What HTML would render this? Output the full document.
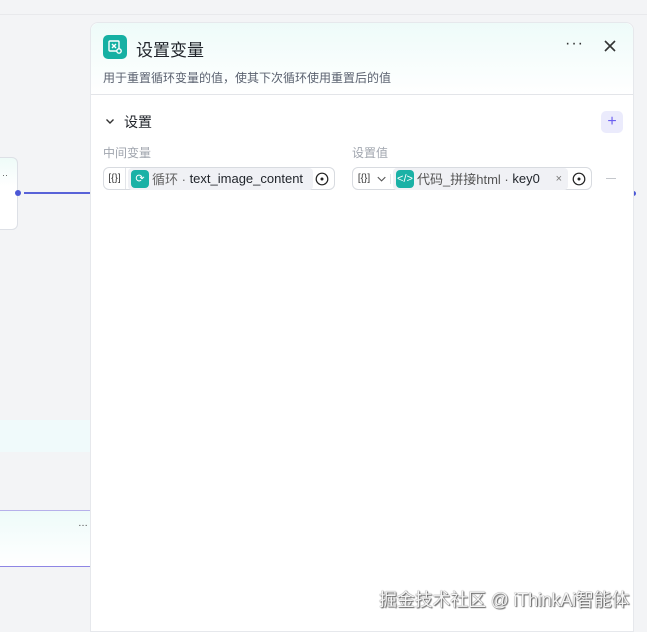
<!DOCTYPE html>
<html><head><meta charset="utf-8"><style>
*{box-sizing:border-box;margin:0;padding:0}
body{width:647px;height:623px;overflow:hidden;background:#f3f4f6;position:relative;font-family:"Liberation Sans","Noto Sans CJK SC",sans-serif;color:#1f2329}
.abs{position:absolute}
.panel{left:90px;top:22px;width:544px;height:610px;background:#fff;border:1px solid #e6e8ec;border-radius:8px 8px 0 0}
.hdr{position:absolute;left:0;top:0;width:100%;height:72px;background:linear-gradient(180deg,#eefbf9,#fff);border-bottom:1px solid #e3e5e9;border-radius:8px 8px 0 0}
.chip{display:inline-flex;align-items:center;height:22px;border-radius:4px;font-size:13px}
.field{position:absolute;top:144px;height:23px;border:1px solid #d8dbe0;border-radius:6px;background:#fff;display:flex;align-items:center}
.icon{width:18px;height:18px;background:#1ab1a6;border-radius:4px;display:inline-flex;align-items:center;justify-content:center;color:#fff;font-size:11px;margin-right:3px}
</style></head><body>
<div class="abs" style="left:-10px;top:157px;width:28px;height:73px;background:linear-gradient(180deg,#eefbf8,#fff 40%);border:1px solid #dde0e6;border-radius:6px"></div>
<div class="abs" style="left:2px;top:170px;font-size:9px;color:#555">··</div>
<div class="abs" style="left:15px;top:190px;width:6px;height:6px;border-radius:50%;background:#4b57d6"></div>
<div class="abs" style="left:24px;top:192px;width:66px;height:1.5px;background:#5862d8"></div>
<div class="abs" style="left:631px;top:191px;width:5px;height:5px;border-radius:50%;background:#4b57d6"></div>
<div class="abs" style="left:0;top:420px;width:90px;height:32px;background:#f0fafb"></div>
<div class="abs" style="left:0;top:510px;width:90px;height:57px;background:linear-gradient(180deg,#eefbf9,#fff);border-top:1px solid #b6b0ea;border-bottom:1.5px solid #8e86e4"></div>
<div class="abs" style="left:78px;top:518px;font-size:10px;color:#444">…</div>
<div class="abs" style="left:0;top:14px;width:647px;height:1px;background:#e8e9ec"></div>
<div class="abs panel">
 <div class="hdr"></div>
 <div class="abs" style="left:12px;top:12px;width:24px;height:24px;border-radius:5px;background:#16b0a3;display:flex;align-items:center;justify-content:center">
  <svg width="16" height="16" viewBox="0 0 16 16" fill="none" stroke="#fff" stroke-width="1.4"><rect x="2" y="2" width="10" height="10" rx="1"/><path d="M5 5l4 4M9 5l-4 4"/><circle cx="12" cy="12" r="2.2" fill="#16b0a3"/></svg>
 </div>
 <div class="abs" style="left:45px;top:13px;font-size:17px;font-weight:normal">设置变量</div>
 <div class="abs" style="left:474px;top:12px;font-size:16px;letter-spacing:1px;color:#333">···</div>
 <svg class="abs" style="left:512px;top:16px" width="14" height="14" viewBox="0 0 14 14" stroke="#333" stroke-width="1.6"><path d="M2 2l10 10M12 2L2 12"/></svg>
 <div class="abs" style="left:12px;top:46px;font-size:12px;color:#5b6270">用于重置循环变量的值，使其下次循环使用重置后的值</div>
 <svg class="abs" style="left:14px;top:93px" width="10" height="10" viewBox="0 0 10 10" fill="none" stroke="#333" stroke-width="1.4"><path d="M1.5 3.5l3.5 3.5 3.5-3.5"/></svg>
 <div class="abs" style="left:33px;top:89px;font-size:14px;font-weight:normal">设置</div>
 <div class="abs" style="left:510px;top:88px;width:22px;height:22px;border-radius:5px;background:#ebebfc;color:#6b5ff0;font-size:16px;text-align:center;line-height:21px">+</div>
 <div class="abs" style="left:12px;top:121px;font-size:12px;color:#a0a5ae">中间变量</div>
 <div class="abs" style="left:261px;top:121px;font-size:12px;color:#a0a5ae">设置值</div>
 <div class="field" style="left:12px;width:232px">
  <span style="width:22px;font-size:10px;color:#333;text-align:center;border-right:1px solid #e3e5e9;height:100%;line-height:21px">[{}]</span>
  <span class="chip" style="background:#f0f1f5;padding:0 10px 0 3px;margin-left:2px"><span class="icon">⟳</span><span style="color:#666">循环 · </span>&nbsp;text_image_content</span>
  <svg style="margin-left:auto;margin-right:5px" width="14" height="14" viewBox="0 0 14 14" fill="none" stroke="#222" stroke-width="1.2"><circle cx="7" cy="7" r="5.8"/><circle cx="7" cy="7" r="0.9" fill="#222"/></svg>
 </div>
 <div class="field" style="left:261px;width:240px">
  <span style="width:22px;font-size:10px;color:#333;text-align:center;height:100%;line-height:21px">[{}]</span>
  <svg width="16" height="10" viewBox="0 0 16 10" fill="none" stroke="#555" stroke-width="1.2" style="border-right:1px solid #e3e5e9"><path d="M3 3l4 4 4-4"/></svg>
  <span class="chip" style="background:#f0f1f5;padding:0 6px 0 3px;margin-left:2px;width:175px"><span class="icon">&lt;/&gt;</span><span style="color:#555">代码_拼接html · </span>&nbsp;key0<span style="margin-left:auto;color:#777;font-size:11px">×</span></span>
  <svg style="margin-left:auto;margin-right:5px" width="14" height="14" viewBox="0 0 14 14" fill="none" stroke="#222" stroke-width="1.2"><circle cx="7" cy="7" r="5.8"/><circle cx="7" cy="7" r="0.9" fill="#222"/></svg>
 </div>
 <div class="abs" style="left:515px;top:155px;width:10px;height:1px;background:#c4c7cc"></div>
</div>
<div class="abs" style="left:379px;top:586px;font-size:18px;color:#f4f4f4;text-shadow:0 0 1px #444,1px 1px 1px #666;letter-spacing:-0.2px">掘金技术社区 @ iThinkAi智能体</div>
</body></html>
